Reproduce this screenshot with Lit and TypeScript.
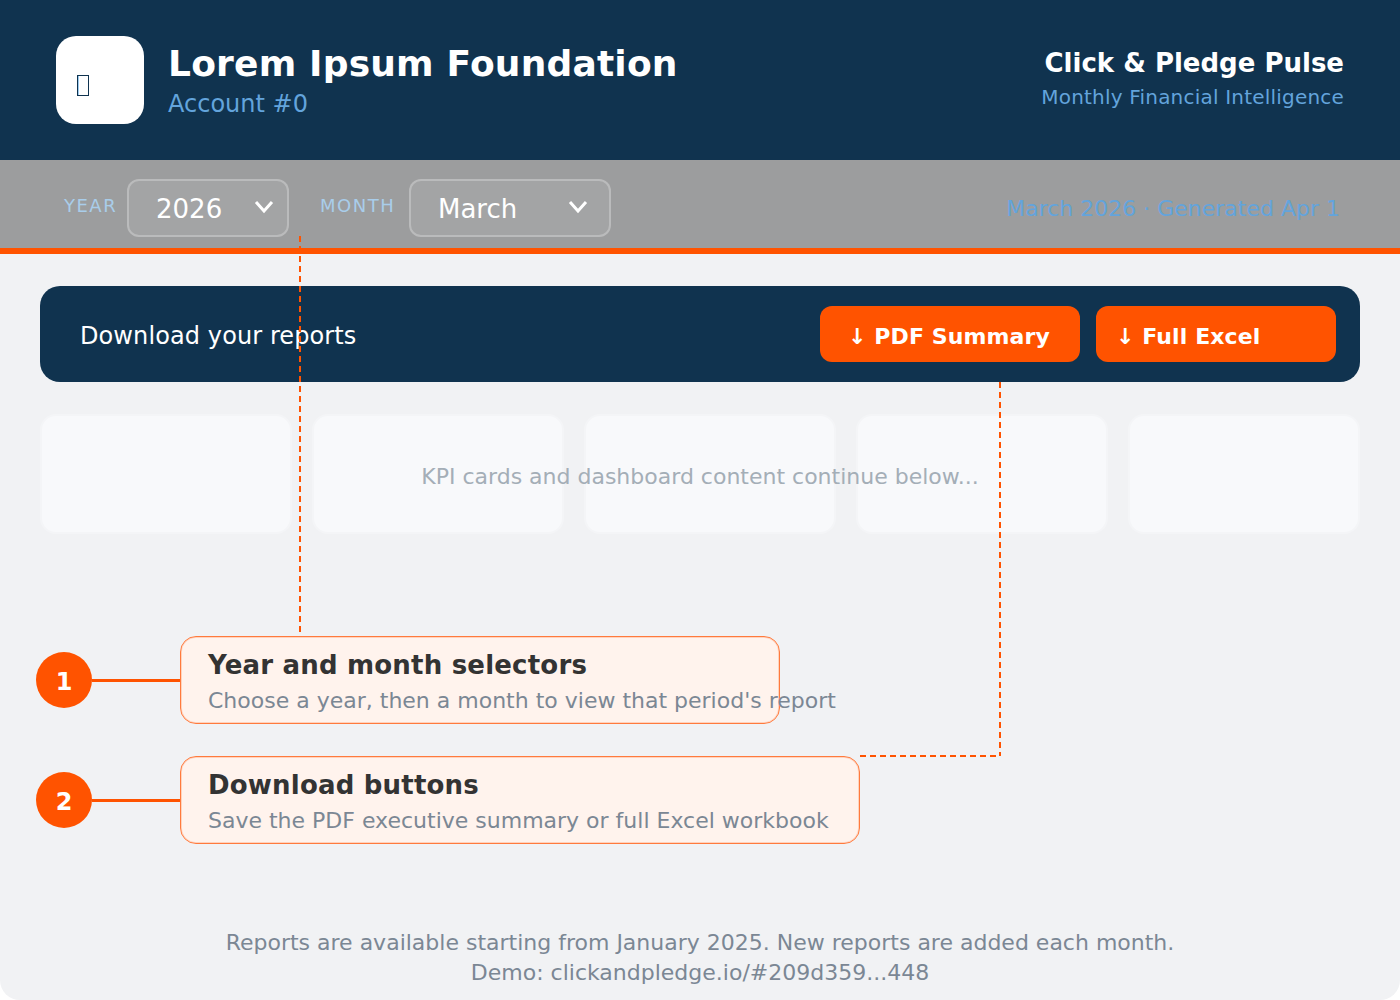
import { LitElement, html, css } from "lit";
import { customElement } from "lit/decorators.js";

const MONTHS = ["January", "February", "March", "April", "May", "June", "July", "August", "September", "October", "November", "December"];

@customElement("app-root")
export class AppRoot extends LitElement {
  static styles = css`
    :host {
      display: block;
      font-family: "DejaVu Sans", sans-serif;
    }

    * {
      box-sizing: border-box;
    }

    .page {
      position: relative;
      display: flex;
      flex-direction: column;
      height: 1000px;
      overflow: hidden;
      background: #f1f2f4;
      border-radius: 0 0 20px 20px;
    }

    header {
      display: flex;
      align-items: center;
      justify-content: space-between;
      height: 160px;
      padding: 0 56px;
      background: #10334f;
    }

    .brand {
      display: flex;
      align-items: center;
      gap: 24px;
    }

    .logo {
      display: flex;
      align-items: center;
      width: 88px;
      height: 88px;
      padding-left: 21px;
      border-radius: 20px;
      background: #fff;
    }

    /* the missing-glyph box of the original */
    .logo span {
      width: 12px;
      height: 21px;
      margin-top: 11px;
      border: 1px solid #10334f;
      box-shadow: inset 1px 0 0 #9ccbf0;
    }

    .titles {
      padding-top: 2px;
    }

    .brand h1 {
      margin: 0;
      color: #fff;
      font-size: 36px;
      line-height: 42px;
      font-weight: 700;
      letter-spacing: 0.2px;
    }

    .account {
      margin-top: 4px;
      color: #63a4dc;
      font-size: 24px;
      line-height: 30px;
    }

    .product {
      text-align: right;
    }

    .product b {
      display: block;
      color: #fff;
      font-size: 26px;
      line-height: 34px;
      margin-top: -4px;
    }

    .product span {
      display: block;
      margin-top: 4px;
      color: #63a4dc;
      font-size: 20px;
      line-height: 26px;
      letter-spacing: 0.2px;
    }

    .filters {
      display: flex;
      align-items: center;
      height: 94px;
      padding: 8px 60px 0 64px;
      background: #9c9d9e;
      border-bottom: 6px solid #ff5300;
    }

    .filters label {
      flex: none;
      padding-bottom: 6px;
      color: #a9cdea;
      font-size: 18px;
      letter-spacing: 1.5px;
    }

    .year-label {
      width: 63px;
    }

    .month-label {
      width: 89px;
    }

    .select {
      position: relative;
      margin-right: 31px;
    }

    .select select {
      display: block;
      height: 58px;
      padding: 2px 0 0 27px;
      appearance: none;
      border: 2px solid rgba(255, 255, 255, 0.25);
      border-radius: 12px;
      background: rgba(255, 255, 255, 0.08);
      color: #fff;
      font: 26px "DejaVu Sans", sans-serif;
    }

    .year select {
      width: 162px;
    }

    .month select {
      width: 202px;
    }

    .select svg {
      position: absolute;
      top: 21px;
      right: 15px;
      pointer-events: none;
    }

    .month svg {
      right: 23px;
    }

    .period {
      margin-left: auto;
      color: #63a4dc;
      font-size: 22px;
    }

    main {
      display: flex;
      flex: 1;
      flex-direction: column;
      padding: 32px 40px 12px;
    }

    .downloads {
      display: flex;
      align-items: center;
      gap: 16px;
      height: 96px;
      padding: 0 24px 0 40px;
      border-radius: 20px;
      background: #10334f;
    }

    .downloads p {
      flex: 1;
      margin: 0;
      padding-top: 3px;
      color: #fff;
      font-size: 24px;
      letter-spacing: 0.1px;
    }

    .downloads button {
      height: 56px;
      padding-top: 5px;
      padding-bottom: 0;
      padding-right: 0;
      border: 0;
      border-radius: 12px;
      background: #ff5300;
      color: #fff;
      font: 700 22px "DejaVu Sans", sans-serif;
      letter-spacing: 0.1px;
      text-align: left;
    }

    .downloads .pdf {
      width: 260px;
      padding-left: 28px;
    }

    .downloads .excel {
      width: 240px;
      padding-left: 20px;
    }

    .kpis {
      position: relative;
      display: grid;
      grid-template-columns: repeat(4, 252px) 232px;
      gap: 20px;
      margin-top: 32px;
    }

    .kpis div {
      height: 120px;
      border: 2px solid #f4f5f7;
      border-radius: 16px;
      background: #f8f9fb;
    }

    .kpis p {
      position: absolute;
      top: 49px;
      left: 0;
      right: 0;
      margin: 0;
      color: #a4aeb7;
      font-size: 22px;
      line-height: 28px;
      text-align: center;
    }

    .callouts {
      display: flex;
      flex-direction: column;
      gap: 32px;
      margin: 102px 0 0 -4px;
    }

    .callout {
      display: flex;
      align-items: center;
    }

    .badge {
      display: flex;
      flex: none;
      align-items: center;
      justify-content: center;
      width: 56px;
      height: 56px;
      padding-top: 3px;
      border-radius: 50%;
      background: #ff5300;
      color: #fff;
      font-size: 24px;
      font-weight: 700;
    }

    .rule {
      flex: none;
      width: 88px;
      height: 3px;
      background: #ff5300;
    }

    .note {
      height: 88px;
      padding: 12px 27px;
      border: 1px solid #ff7a3d;
      border-radius: 16px;
      background: #fff3ed;
      box-shadow: inset 0 0 0 1px rgba(255, 85, 0, 0.2);
      white-space: nowrap;
    }

    .note b {
      display: block;
      color: #333333;
      font-size: 26px;
      line-height: 32px;
      letter-spacing: 0.2px;
    }

    .note span {
      display: block;
      margin-top: 6px;
      color: #7b8794;
      font-size: 22px;
      line-height: 28px;
    }

    .selectors {
      width: 600px;
    }

    .buttons {
      width: 680px;
    }

    footer {
      margin-top: auto;
      color: #7b8794;
      font-size: 22px;
      line-height: 30px;
      text-align: center;
    }

    .leaders {
      position: absolute;
      inset: 0;
      pointer-events: none;
    }

    .leaders line {
      stroke: #ff5300;
      stroke-width: 2;
      stroke-dasharray: 6 4;
    }
  `;

  render() {
    return html`
      <div class="page">
        <header>
          <div class="brand">
            <div class="logo"><span></span></div>
            <div class="titles">
              <h1>Lorem Ipsum Foundation</h1>
              <div class="account">Account #0</div>
            </div>
          </div>
          <div class="product">
            <b>Click &amp; Pledge Pulse</b>
            <span>Monthly Financial Intelligence</span>
          </div>
        </header>

        <div class="filters">
          <label class="year-label" for="year">YEAR</label>
          <div class="select year">
            <select id="year">
              <option>2025</option>
              <option selected>2026</option>
            </select>
            ${this.chevron()}
          </div>
          <label class="month-label" for="month">MONTH</label>
          <div class="select month">
            <select id="month">
              ${MONTHS.map((m) => html`<option ?selected=${m === "March"}>${m}</option>`)}
            </select>
            ${this.chevron()}
          </div>
          <span class="period">March 2026 · Generated Apr 1</span>
        </div>

        <main>
          <section class="downloads">
            <p>Download your reports</p>
            <button class="pdf">↓ PDF Summary</button>
            <button class="excel">↓ Full Excel</button>
          </section>

          <section class="kpis">
            <div></div>
            <div></div>
            <div></div>
            <div></div>
            <div></div>
            <p>KPI cards and dashboard content continue below...</p>
          </section>

          <section class="callouts">
            <div class="callout">
              <span class="badge">1</span>
              <span class="rule"></span>
              <div class="note selectors">
                <b>Year and month selectors</b>
                <span>Choose a year, then a month to view that period's report</span>
              </div>
            </div>
            <div class="callout">
              <span class="badge">2</span>
              <span class="rule"></span>
              <div class="note buttons">
                <b>Download buttons</b>
                <span>Save the PDF executive summary or full Excel workbook</span>
              </div>
            </div>
          </section>

          <footer>
            Reports are available starting from January 2025. New reports are added each month.<br />
            Demo: clickandpledge.io/#209d359...448
          </footer>
        </main>

        <svg class="leaders" width="1400" height="1000">
          <line x1="300" y1="236" x2="300" y2="636"></line>
          <line x1="1000" y1="382" x2="1000" y2="756"></line>
          <line x1="860" y1="756" x2="1000" y2="756"></line>
        </svg>
      </div>
    `;
  }

  chevron() {
    return html`<svg width="20" height="14" viewBox="0 0 20 14">
      <polyline points="2,2 10,11 18,2" fill="none" stroke="#fff" stroke-width="3"></polyline>
    </svg>`;
  }
}
